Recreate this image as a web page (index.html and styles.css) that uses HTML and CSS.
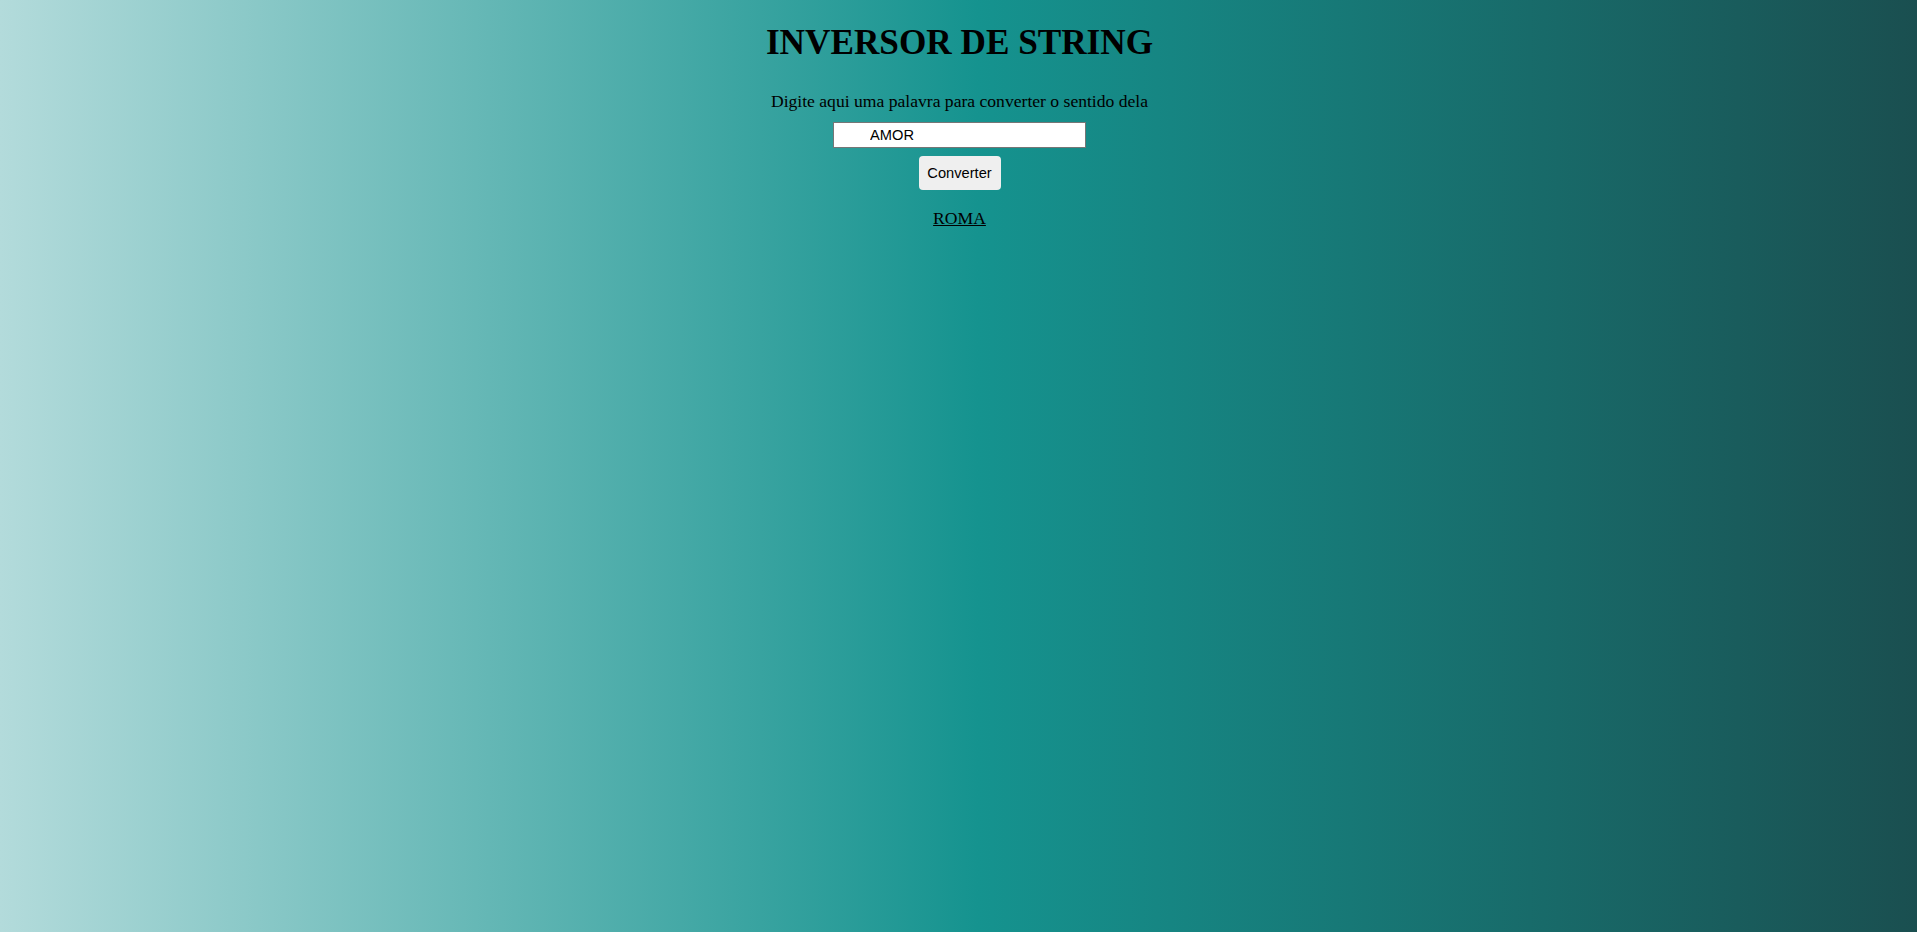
FILE: index.html
```html
<!DOCTYPE html>
<html lang="pt-BR">
<head>
<meta charset="utf-8">
<title>Inversor de String</title>
<link rel="stylesheet" href="styles.css">
</head>
<body>
<main class="page">
  <h1 class="title">INVERSOR DE STRING</h1>
  <p class="hint">Digite aqui uma palavra para converter o sentido dela</p>
  <input class="field" type="text" value="AMOR">
  <button class="btn" type="button">Converter</button>
  <p class="result">ROMA</p>
</main>
</body>
</html>
```

FILE: styles.css
```css
html, body {
  margin: 0;
  padding: 0;
  min-height: 100%;
}
body {
  min-height: 932px;
  background: linear-gradient(to right, #b3dbdb 0%, #15938f 51%, #1a4f50 100%);
  font-family: "Liberation Serif", "Times New Roman", serif;
  color: #000;
}
.page {
  display: flex;
  flex-direction: column;
  align-items: center;
  text-align: center;
  padding-left: 2px;
}
.title {
  margin: 23px 0 0;
  font-size: 35.2px;
  line-height: 40px;
  font-weight: bold;
}
.hint {
  margin: 28px 0 0;
  font-size: 17.6px;
  line-height: 20px;
}
.field {
  margin: 11px 0 0;
  box-sizing: border-box;
  width: 253px;
  height: 26px;
  padding: 0 4px 0 36px;
  border: 1px solid #767676;
  background: #fff;
  font-family: "Liberation Sans", Arial, sans-serif;
  font-size: 14.67px;
  color: #000;
  outline: none;
}
.btn {
  margin: 8px 0 0;
  box-sizing: border-box;
  width: 82px;
  height: 34px;
  padding: 0;
  border: none;
  border-radius: 4px;
  background: #efefef;
  font-family: "Liberation Sans", Arial, sans-serif;
  font-size: 14.67px;
  color: #000;
}
.result {
  margin: 18px 0 0;
  font-size: 17.6px;
  line-height: 20px;
  text-decoration: underline;
}
```
